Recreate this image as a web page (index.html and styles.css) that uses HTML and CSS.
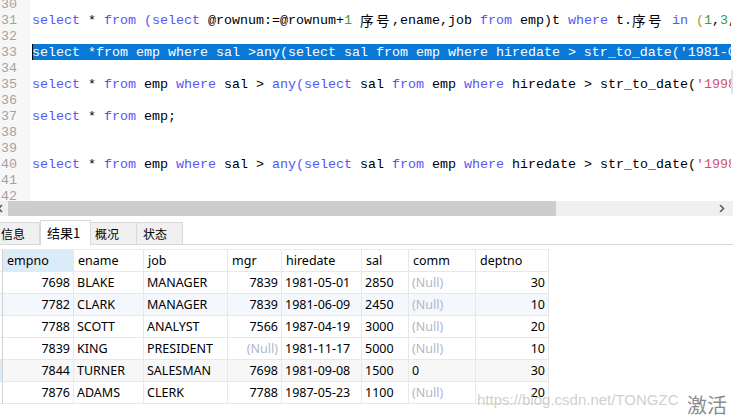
FILE: index.html
```html
<!DOCTYPE html>
<html>
<head>
<meta charset="utf-8">
<link rel="stylesheet" href="styles.css">
</head>
<body>
<div class="app">
  <div class="editor">
    <div class="lines">
      <div class="line"><span class="ln">30</span><span class="code"></span></div>
      <div class="line"><span class="ln">31</span><span class="code"><span class="k">select</span> * <span class="k">from</span> <span class="k">(select</span> @rownum:=@rownum+<span class="n">1</span> <span class="cjk">序号</span>,ename,job <span class="k">from</span> emp)t <span class="k">where</span> t.<span class="cjk">序号</span> <span class="k">in</span> <span class="p">(</span><span class="n">1</span>,<span class="n">3</span>,<span class="n">5</span>);</span></div>
      <div class="line"><span class="ln">32</span><span class="code"></span></div>
      <div class="line"><span class="ln">33</span><span class="code sel">select *from emp where sal &gt;any(select sal from emp where hiredate &gt; str_to_date('1981-05-01','%Y-%m-%d'));</span></div>
      <div class="line"><span class="ln">34</span><span class="code"></span></div>
      <div class="line"><span class="ln">35</span><span class="code"><span class="k">select</span> * <span class="k">from</span> emp <span class="k">where</span> sal &gt; <span class="k">any(select</span> sal <span class="k">from</span> emp <span class="k">where</span> hiredate &gt; str_to_date(<span class="s">'1998-01-01'</span>,<span class="s">'%Y-%m-%d'</span>));</span></div>
      <div class="line"><span class="ln">36</span><span class="code"></span></div>
      <div class="line"><span class="ln">37</span><span class="code"><span class="k">select</span> * <span class="k">from</span> emp;</span></div>
      <div class="line"><span class="ln">38</span><span class="code"></span></div>
      <div class="line"><span class="ln">39</span><span class="code"></span></div>
      <div class="line"><span class="ln">40</span><span class="code"><span class="k">select</span> * <span class="k">from</span> emp <span class="k">where</span> sal &gt; <span class="k">any(select</span> sal <span class="k">from</span> emp <span class="k">where</span> hiredate &gt; str_to_date(<span class="s">'1998-01-01'</span>,<span class="s">'%Y-%m-%d'</span>));</span></div>
      <div class="line"><span class="ln">41</span><span class="code"></span></div>
      <div class="line"><span class="ln">42</span><span class="code"></span></div>
    </div>
    <div class="vscroll"><div class="vthumb"></div></div>
  </div>
  <div class="hscroll">
    <span class="arrow left"><svg width="8" height="15" viewBox="0 0 8 15"><path d="M4 4 L0.5 7.5 L4 11" fill="none" stroke="#606060" stroke-width="1.6"/></svg></span>
    <div class="hthumb"></div>
    <div class="htrack"></div>
    <span class="arrow right"><svg width="17" height="15" viewBox="0 0 17 15"><path d="M4 4 L7.5 7.5 L4 11" fill="none" stroke="#606060" stroke-width="1.6"/></svg></span>
  </div>
  <div class="tabs">
    <div class="tab t1">信息</div>
    <div class="tab active t2">结果1</div>
    <div class="tab t3">概况</div>
    <div class="tab t4">状态</div>
    <div class="tabfill"></div>
  </div>
  <div class="grid">
    <div class="row head">
      <div class="c rs"></div><div class="c hl">empno</div><div class="c">ename</div><div class="c">job</div><div class="c">mgr</div><div class="c">hiredate</div><div class="c">sal</div><div class="c">comm</div><div class="c">deptno</div>
    </div>
    <div class="row">
      <div class="c rs"></div><div class="c r">7698</div><div class="c">BLAKE</div><div class="c">MANAGER</div><div class="c r">7839</div><div class="c">1981-05-01</div><div class="c">2850</div><div class="c null">(Null)</div><div class="c r">30</div>
    </div>
    <div class="row alt">
      <div class="c rs"></div><div class="c r">7782</div><div class="c">CLARK</div><div class="c">MANAGER</div><div class="c r">7839</div><div class="c">1981-06-09</div><div class="c">2450</div><div class="c null">(Null)</div><div class="c r">10</div>
    </div>
    <div class="row">
      <div class="c rs"></div><div class="c r">7788</div><div class="c">SCOTT</div><div class="c">ANALYST</div><div class="c r">7566</div><div class="c">1987-04-19</div><div class="c">3000</div><div class="c null">(Null)</div><div class="c r">20</div>
    </div>
    <div class="row">
      <div class="c rs"></div><div class="c r">7839</div><div class="c">KING</div><div class="c">PRESIDENT</div><div class="c r null">(Null)</div><div class="c">1981-11-17</div><div class="c">5000</div><div class="c null">(Null)</div><div class="c r">10</div>
    </div>
    <div class="row cur">
      <div class="c rs"></div><div class="c r">7844</div><div class="c">TURNER</div><div class="c">SALESMAN</div><div class="c r">7698</div><div class="c">1981-09-08</div><div class="c">1500</div><div class="c">0</div><div class="c r">30</div>
    </div>
    <div class="row">
      <div class="c rs"></div><div class="c r">7876</div><div class="c">ADAMS</div><div class="c">CLERK</div><div class="c r">7788</div><div class="c">1987-05-23</div><div class="c">1100</div><div class="c null">(Null)</div><div class="c r">20</div>
    </div>
  </div>
  <div class="wm">https://blog.csdn.net/TONGZC</div>
  <div class="act">激活</div>
</div>
</body>
</html>
```

FILE: styles.css
```css
html, body {
  margin: 0;
  padding: 0;
  background: #ffffff;
}
.app {
  position: relative;
  width: 733px;
  height: 418px;
  overflow: hidden;
  background: #ffffff;
}
.editor {
  display: flex;
  height: 201px;
  overflow: hidden;
}
.lines {
  flex: 1;
  margin-top: -4px;
  overflow: hidden;
  font-family: "Liberation Mono", "Noto Sans CJK SC", monospace;
  font-size: 13.333px;
  line-height: 15px;
  color: #000;
}
.line {
  display: flex;
  height: 16px;
  white-space: pre;
}
.ln {
  box-sizing: border-box;
  flex: 0 0 30px;
  height: 16px;
  padding-left: 1px;
  padding-top: 1px;
  background: #f7f7f7;
  color: #a3a3a3;
}
.code {
  box-sizing: border-box;
  flex: 1;
  height: 16px;
  padding-top: 1px;
  margin-left: 2px;
  overflow: hidden;
  white-space: pre;
}
.code.sel {
  background: #0a78d6;
  color: #ffffff;
  box-shadow: inset 1px 0 0 #000;
}
.k { color: #5258f2; }
.n { color: #3b9c38; }
.s { color: #d2506e; }
.p { color: #a89530; }
.cjk {
  display: inline-block;
  height: 15px;
  vertical-align: top;
  font-family: "Noto Sans CJK SC", sans-serif;
  font-size: 13.5px;
  line-height: 15px;
  letter-spacing: 2.5px;
}
.vscroll {
  flex: 0 0 2px;
  background: #ffffff;
}
.vthumb {
  margin-top: 70px;
  height: 24px;
  background: #e2e2e2;
}
.hscroll {
  display: flex;
  height: 15px;
  background: #f0f0f0;
}
.arrow {
  display: flex;
  align-items: center;
}
.arrow.left {
  width: 8px;
  margin-left: -2px;
  margin-right: 2px;
}
.hthumb {
  width: 548px;
  background: #cdcdcd;
}
.htrack {
  flex: 1;
}
.arrow.right {
  width: 17px;
  justify-content: flex-start;
}
.tabs {
  display: flex;
  align-items: flex-end;
  height: 25px;
  margin-top: 4px;
  font-family: "Noto Sans CJK SC", sans-serif;
  font-size: 12px;
  color: #000;
}
.tab {
  box-sizing: border-box;
  height: 23px;
  line-height: 21px;
  background: #f0f0f0;
  border-top: 1px solid #d9d9d9;
  border-right: 1px solid #d9d9d9;
  border-bottom: 1px solid #d9d9d9;
  padding-left: 5px;
}
.t1 { width: 40px; padding-left: 1px; }
.t3 { width: 46px; padding-left: 4px; }
.t4 { width: 46px; padding-left: 6px; }
.tab.active {
  width: 51px;
  height: 25px;
  line-height: 24px;
  background: #ffffff;
  border-left: 1px solid #d9d9d9;
  border-bottom: none;
  padding-left: 6px;
  font-size: 13px;
}
.tabfill {
  flex: 1;
  height: 1px;
  background: #d9d9d9;
}
.grid {
  margin-top: 4px;
  width: 549px;
  border-top: 1px solid #eaeaea;
  font-family: "Noto Sans", sans-serif;
  font-size: 12.5px;
  color: #000;
}
.row {
  display: grid;
  grid-template-columns: 3px 71px 70px 84px 54px 80px 47px 67px 73px;
  height: 22px;
}
.c {
  box-sizing: border-box;
  border-right: 1px solid #e8e8e8;
  border-bottom: 1px solid #e8e8e8;
  padding-left: 3px;
  line-height: 21px;
  white-space: nowrap;
  overflow: hidden;
}
.head .c { padding-left: 4px; }
.c.rs { padding: 0; border-right-color: #d0d0d0; }
.c.hl { background: #dcebf8; }
.c.r { text-align: right; padding-left: 0; padding-right: 3px; }
.null { color: #b3b5cc; }
.row.alt .c { background: #f4f8fc; }
.row.cur .c { background: #f7f7f7; }
.row.cur .c.rs { background: #dcebf8; }
.wm {
  position: absolute;
  left: 477px;
  top: 391px;
  font-family: "Liberation Sans", sans-serif;
  font-size: 15px;
  line-height: 17px;
  color: rgba(190, 190, 190, 0.75);
}
.act {
  position: absolute;
  left: 687px;
  top: 392px;
  font-family: "Noto Sans CJK SC", sans-serif;
  font-size: 20px;
  line-height: 26px;
  color: #8a8a8a;
}
```
